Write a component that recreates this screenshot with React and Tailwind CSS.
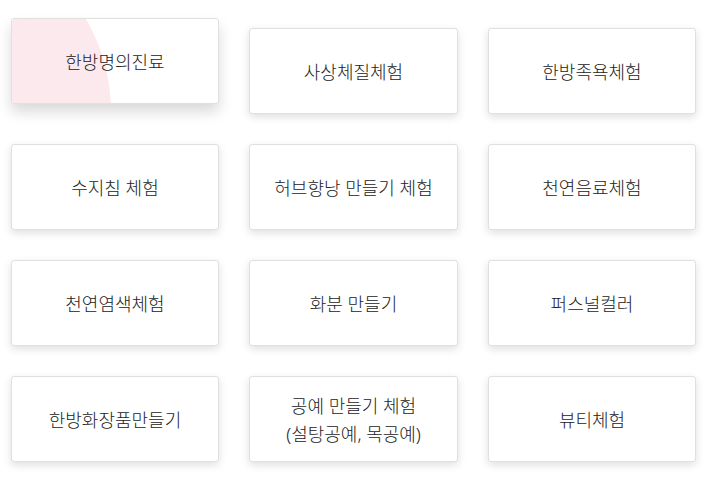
import React from 'react';

const items = [
  ['한방명의진료'],
  ['사상체질체험'],
  ['한방족욕체험'],
  ['수지침 체험'],
  ['허브향낭 만들기 체험'],
  ['천연음료체험'],
  ['천연염색체험'],
  ['화분 만들기'],
  ['퍼스널컬러'],
  ['한방화장품만들기'],
  ['공예 만들기 체험', '(설탕공예, 목공예)'],
  ['뷰티체험'],
];

const Card = ({ lines, active }) => (
  <div
    className={`relative h-[86px] overflow-hidden rounded-[3px] border border-[#e0e0e0] bg-white flex flex-col items-center justify-center pt-[2px] text-[18px] font-light leading-[28px] text-[#222] ${
      active
        ? '-translate-y-[10px] shadow-[0_8px_14px_rgba(0,0,0,0.15)]'
        : 'shadow-[0_3px_9px_rgba(0,0,0,0.13)]'
    }`}
  >
    {active && (
      <span className="absolute left-[-263px] top-[-89px] h-[362px] w-[362px] rounded-full bg-[#fce9ed]" />
    )}
    {lines.map((l) => (
      <span key={l} className="relative">{l}</span>
    ))}
  </div>
);

export default function App() {
  return (
    <div
      className="min-h-[480px] w-[710px] bg-white pl-[11px] pt-[28px]"
      style={{ fontFamily: '"Noto Sans", "Noto Sans CJK KR", sans-serif' }}
    >
      <div className="grid grid-cols-[208px_209px_208px] gap-x-[30px] gap-y-[30px]">
        {items.map((lines, i) => (
          <Card key={i} lines={lines} active={i === 0} />
        ))}
      </div>
    </div>
  );
}
